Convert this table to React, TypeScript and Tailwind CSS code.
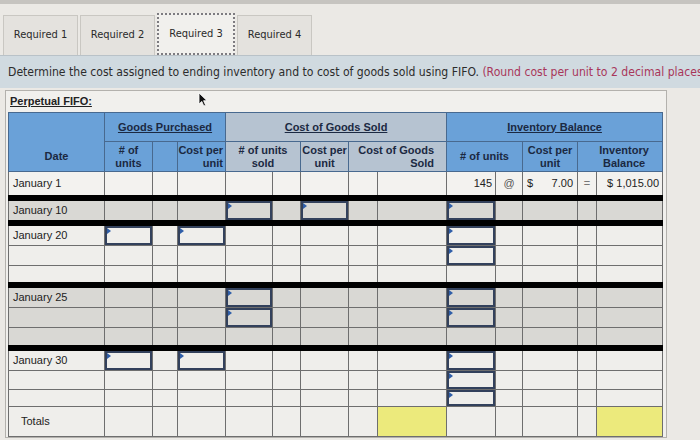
import React from 'react'

const COLS = [96, 48, 25, 48, 47, 28, 48, 29, 69, 49, 27, 55, 19, 66]

type BodyRow = {
  label?: string
  h: number
  inputs: number[]
  sep?: number
}

type Group = {
  tone: 'light' | 'dark'
  rows: BodyRow[]
}

const groups: Group[] = [
  { tone: 'dark', rows: [{ label: 'January 10', h: 25, inputs: [4, 6, 9], sep: 6 }] },
  {
    tone: 'light',
    rows: [
      { label: 'January 20', h: 23, inputs: [1, 3, 9], sep: 6 },
      { h: 20, inputs: [9] },
      { h: 19, inputs: [] },
    ],
  },
  {
    tone: 'dark',
    rows: [
      { label: 'January 25', h: 23, inputs: [4, 9], sep: 6 },
      { h: 20, inputs: [4, 9] },
      { h: 20, inputs: [] },
    ],
  },
  {
    tone: 'light',
    rows: [
      { label: 'January 30', h: 23, inputs: [1, 3, 9], sep: 6 },
      { h: 19, inputs: [9] },
      { h: 17, inputs: [9] },
    ],
  },
]

const tabs = ['Required 1', 'Required 2', 'Required 3', 'Required 4']

function InputBox() {
  return (
    <div className="absolute inset-0 border-2 border-[#33415c]">
      <span className="absolute left-0 top-0 h-0 w-0 border-y-[3px] border-l-[4px] border-y-transparent border-l-[#2f5ea8]" />
    </div>
  )
}

function Tabs() {
  return (
    <div className="flex items-end gap-[2px] px-[3px] pt-[9px]">
      {tabs.map((tab, i) =>
        i === 2 ? (
          <div
            key={tab}
            className="flex h-[42px] w-[78px] items-center justify-center border-2 border-dotted border-[#7d7b80] bg-[#f1f0ed] text-[11px] text-[#2a2a2a]"
          >
            {tab}
          </div>
        ) : (
          <div
            key={tab}
            className="flex h-[40px] w-[75px] items-center justify-center border border-b-0 border-[#c9c7c2] bg-[#e4e2de] text-[11px] text-[#2a2a2a]"
          >
            {tab}
          </div>
        )
      )}
    </div>
  )
}

function Header() {
  const blue = 'bg-[#6aa1d8]'
  const grey = 'bg-[#b6c3d1]'
  const th =
    'border border-[#48698f] p-0 whitespace-nowrap font-bold text-[11px] leading-[13px] text-[#1b2942]'
  return (
    <thead>
      <tr className="h-[29px]">
        <th rowSpan={2} className={`${th} ${blue} pb-[8px] text-center align-bottom`}>
          Date
        </th>
        <th colSpan={3} className={`${th} ${blue} text-center`}>
          <span className="underline">Goods Purchased</span>
        </th>
        <th colSpan={5} className={`${th} ${grey} text-center`}>
          <span className="underline">Cost of Goods Sold</span>
        </th>
        <th colSpan={5} className={`${th} ${blue} text-center`}>
          <span className="underline">Inventory Balance</span>
        </th>
      </tr>
      <tr className="h-[30px]">
        <th className={`${th} ${blue} text-center`}>
          # of
          <br />
          units
        </th>
        <th className={`${th} ${blue}`} />
        <th className={`${th} ${blue} pr-[2px] text-right`}>
          Cost per
          <br />
          unit
        </th>
        <th colSpan={2} className={`${th} ${grey} text-center`}>
          # of units
          <br />
          sold
        </th>
        <th className={`${th} ${grey} text-center`}>
          Cost per
          <br />
          unit
        </th>
        <th colSpan={2} className={`${th} ${grey} pr-[12px] text-right`}>
          Cost of Goods
          <br />
          Sold
        </th>
        <th colSpan={2} className={`${th} ${blue} text-center`}>
          # of units
        </th>
        <th className={`${th} ${blue} text-center`}>
          Cost per
          <br />
          unit
        </th>
        <th colSpan={2} className={`${th} ${blue} pl-[8px] text-center`}>
          Inventory
          <br />
          Balance
        </th>
      </tr>
    </thead>
  )
}

function Body() {
  const td = 'relative border border-[#6e6e6e] p-0 text-[11px] text-[#222]'
  return (
    <tbody>
      <tr className="h-[26px] bg-[#f3f2ef]">
        <td className={`${td} pl-[4px]`}>January 1</td>
        {COLS.slice(1, 9).map((_, i) => (
          <td key={i} className={td} />
        ))}
        <td className={`${td} pr-[3px] text-right`}>145</td>
        <td className={`${td} text-center text-[#555]`}>@</td>
        <td className={`${td} px-[4px]`}>
          <div className="flex justify-between">
            <span>$</span>
            <span>7.00</span>
          </div>
        </td>
        <td className={`${td} text-center text-[#777]`}>=</td>
        <td className={`${td} pr-[3px] text-right`}>$ 1,015.00</td>
      </tr>
      {groups.map((g, gi) =>
        g.rows.map((r, ri) => (
          <tr
            key={`${gi}-${ri}`}
            className={g.tone === 'dark' ? 'bg-[#d9d8d4]' : 'bg-[#efeeeb]'}
            style={{ height: r.h }}
          >
            {COLS.map((_, ci) => (
              <td
                key={ci}
                className={`${td} ${ci === 0 ? 'pl-[4px]' : ''}`}
                style={r.sep ? { borderTop: `${r.sep}px solid #000` } : undefined}
              >
                {ci === 0 && r.label}
                {r.inputs.includes(ci) && <InputBox />}
              </td>
            ))}
          </tr>
        ))
      )}
      <tr className="h-[30px] bg-[#efeeeb]">
        {COLS.map((_, ci) => (
          <td
            key={ci}
            className={`${td} ${ci === 0 ? 'pl-[12px]' : ''} ${ci === 8 || ci === 13 ? 'bg-[#ecea7c]' : ''}`}
          >
            {ci === 0 && 'Totals'}
          </td>
        ))}
      </tr>
    </tbody>
  )
}

export default function App() {
  return (
    <div className="relative h-[440px] w-[700px] overflow-hidden bg-[#ebe9e5] font-['DejaVu_Sans_Condensed','DejaVu_Sans',sans-serif]">
      <div className="h-[4px] bg-[#c6c4c0]" />
      <Tabs />
      <div className="flex h-[33px] items-center whitespace-nowrap border-t border-[#b9c2c8] bg-[#d0dae0] pl-[8px] text-[12.1px] text-[#2c2c2c]">
        Determine the cost assigned to ending inventory and to cost of goods sold using FIFO.&nbsp;
        <span className="text-[#a8365a]">(Round cost per unit to 2 decimal places.)</span>
      </div>
      <div className="ml-[5px] mt-[2px] w-[662px] border border-[#b3b1ad] bg-[#f1f0ed] px-[2px] font-['Liberation_Sans',Arial,sans-serif]">
        <div className="flex h-[21px] items-center pl-[2px] text-[11px] font-bold text-[#222] underline">
          Perpetual FIFO:
        </div>
        <table className="table-fixed border-collapse" style={{ width: 654 }}>
          <colgroup>
            {COLS.map((w, i) => (
              <col key={i} style={{ width: w }} />
            ))}
          </colgroup>
          <Header />
          <Body />
        </table>
      </div>
      <svg className="absolute left-[198px] top-[92px]" width="10" height="15" viewBox="0 0 10 15">
        <path d="M1 1 L1 12 L3.8 9.4 L5.8 14 L7.6 13.2 L5.6 8.7 L9 8.7 Z" fill="#111" stroke="#fff" strokeWidth="0.8" />
      </svg>
    </div>
  )
}
